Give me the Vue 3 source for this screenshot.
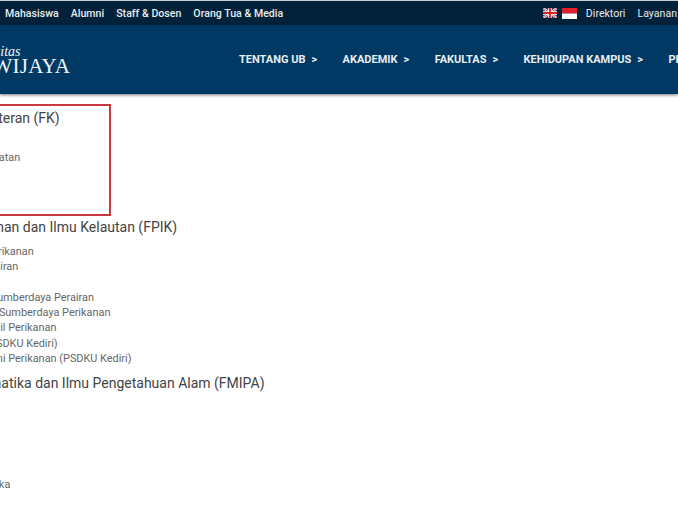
<script setup>
const leftLinks = ['Mahasiswa', 'Alumni', 'Staff & Dosen', 'Orang Tua & Media']
const navItems = ['TENTANG UB', 'AKADEMIK', 'FAKULTAS', 'KEHIDUPAN KAMPUS', 'PENELITIAN']
const faculties = [
  { name: 'Fakultas Kedokteran (FK)', boxed: true, items: ['Kedokteran', 'Ilmu Keperawatan', 'Farmasi', 'Kebidanan', 'Gizi'] },
  {
    name: 'Fakultas Perikanan dan Ilmu Kelautan (FPIK)', items: [
      'Agrobisnis Perikanan', 'Budidaya Perairan', 'Ilmu Kelautan', 'Manajemen Sumberdaya Perairan',
      'Pemanfaatan Sumberdaya Perikanan', 'Teknologi Hasil Perikanan', 'Agrobisnis (PSDKU Kediri)',
      'Sosial Ekonomi Perikanan (PSDKU Kediri)'
    ]
  },
  { name: 'Fakultas Matematika dan Ilmu Pengetahuan Alam (FMIPA)', items: ['Biologi', 'Fisika', 'Kimia', 'Matematika', 'Statistika', 'Teknik Geofisika'] }
]
</script>

<template>
  <div class="page">
    <div class="topbar">
      <div class="top-left">
        <a v-for="l in leftLinks" :key="l">{{ l }}</a>
      </div>
      <div class="top-right">
        <svg class="flag" width="14" height="10" viewBox="0 0 14 10">
          <rect width="14" height="10" fill="#2b3f86" />
          <path d="M0 0L14 10M14 0L0 10" stroke="#fff" stroke-width="2.2" />
          <path d="M0 0L14 10M14 0L0 10" stroke="#d22" stroke-width="0.8" />
          <path d="M7 0V10M0 5H14" stroke="#fff" stroke-width="3.4" />
          <path d="M7 0V10M0 5H14" stroke="#d22" stroke-width="1.8" />
        </svg>
        <svg class="flag id" width="15" height="11" viewBox="0 0 15 11">
          <rect width="15" height="5.5" fill="#e0202a" />
          <rect y="5.5" width="15" height="5.5" fill="#fff" />
        </svg>
        <a class="dir">Direktori</a>
        <a class="lay">Layanan</a>
      </div>
    </div>

    <header class="mainbar">
      <div class="logo">
        <span class="logo-top">Universitas</span>
        <span class="logo-main">BRAWIJAYA</span>
      </div>
      <nav class="nav">
        <a v-for="n in navItems" :key="n">{{ n }}<span class="chev">&gt;</span></a>
      </nav>
    </header>

    <main class="content">
      <section v-for="f in faculties" :key="f.name" class="faculty" :class="{ boxed: f.boxed }">
        <h4>{{ f.name }}</h4>
        <ul>
          <li v-for="i in f.items" :key="i">{{ i }}</li>
        </ul>
      </section>
    </main>
  </div>
</template>

<style>
body { margin: 0; background: #fff; }
</style>

<style scoped>
.page {
  width: 678px;
  height: 509px;
  overflow: hidden;
  font-family: Roboto, "Liberation Sans", sans-serif;
  background: #fff;
}
.topbar {
  height: 25px;
  box-sizing: border-box;
  border-top: 1px solid #c9ced2;
  background: #02213a;
  color: #e6ebef;
  font-size: 10.6px;
  font-weight: 500;
  display: flex;
  align-items: center;
  justify-content: space-between;
}
.top-left {
  display: flex;
  gap: 12px;
  padding-left: 5px;
}
.top-right {
  display: flex;
  align-items: center;
  margin-right: 1px;
}
.flag { margin-right: 5px; }
.flag.id { margin-right: 9px; }
.dir { margin-right: 12px; font-weight: 400; }
.lay { font-weight: 400; }
.mainbar {
  height: 69px;
  background: #003a64;
  display: flex;
  align-items: center;
  box-shadow: 0 1px 3px rgba(0, 0, 0, 0.55);
  position: relative;
}
.logo {
  width: 239px;
  flex: none;
  display: flex;
  flex-direction: column;
  align-items: flex-end;
  box-sizing: border-box;
  padding-right: 169px;
  color: #f1f4f6;
  font-family: "Liberation Serif", serif;
  line-height: 1;
  overflow: hidden;
}
.logo-top {
  align-self: flex-start;
  margin-left: -44px;
  padding-top: 3px;
  margin-bottom: -3px;
  font-size: 14px;
  font-style: italic;
}
.logo-main {
  font-size: 21px;
  letter-spacing: 0.2px;
  white-space: nowrap;
}
.nav {
  display: flex;
  gap: 25.4px;
  color: #e8edf1;
  font-size: 11px;
  font-weight: 700;
  white-space: nowrap;
}
.chev { margin-left: 6px; }
.content {
  margin-left: -99px;
  padding-top: 10px;
  color: #666;
}
.faculty { width: 600px; margin-bottom: 7px; }
.faculty.boxed {
  width: 224px;
  height: 112px;
  box-sizing: border-box;
  border: 2px solid #c9393f;
  padding-left: 14px;
  margin-bottom: 1px;
  margin-left: -14px;
}
h4 {
  margin: 0;
  font-size: 14px;
  font-weight: 400;
  line-height: 20px;
  color: #444;
  white-space: nowrap;
}
.boxed h4 { padding-top: 2px; }
ul {
  list-style: none;
  margin: 7px 0 0;
  padding: 0 0 0 30px;
  font-size: 10.9px;
  line-height: 15.3px;
}
li { white-space: nowrap; }
</style>
